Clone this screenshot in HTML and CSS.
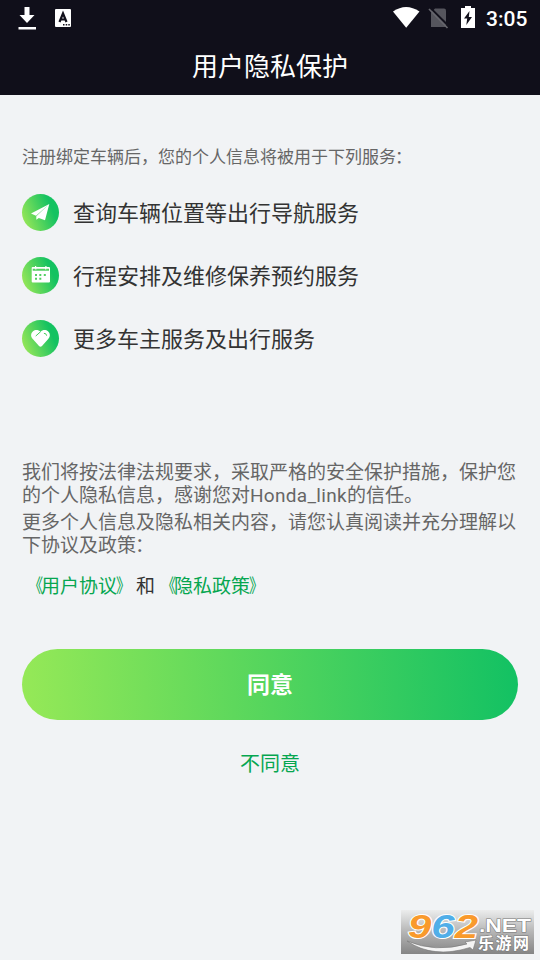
FILE: index.html
```html
<!DOCTYPE html>
<html lang="zh-CN">
<head>
<meta charset="utf-8">
<title>用户隐私保护</title>
<link rel="stylesheet" href="styles.css">
</head>
<body>
<header class="header">
  <div class="status">
    <svg class="status-download" width="20" height="26" viewBox="0 0 20 26"><path fill="#fff" d="M6.500 2h5v8h5L9 18 1.500 10h5zM.5 22H18v2.500H.5z"/></svg>
    <svg class="status-app" width="16" height="18" viewBox="0 0 16 18"><rect width="16" height="18" rx="1" fill="#fff"/><path fill="none" stroke="#11101b" stroke-width="2.200" d="M4.500 13 8 4.500 11.500 13M5.500 10.500h5"/><path fill="#11101b" d="M8 15h1.500v1.500H8zm2.700 0h1.500v1.500h-1.500zm2.600 0h1.500v1.500h-1.500z"/></svg>
    <span class="status-space"></span>
    <svg class="status-wifi" width="27" height="21" viewBox="0 0 27 21"><path fill="#fff" d="M0 4.500Q13-4.500 26.500 4.500L13.200 20.800z"/></svg>
    <svg class="status-sim" width="21" height="22" viewBox="0 0 21 22"><path fill="#55555d" d="M7 1.500h9q2 0 2 2V20H3V5.500z"/><path stroke="#11101b" stroke-width="2" d="M2 .5 20.500 19"/><path stroke="#66666d" stroke-width="1.700" d="M1 2 19.500 21"/></svg>
    <svg class="status-battery" width="14" height="22" viewBox="0 0 14 22"><path fill="#fff" d="M4 0h6v2h4v20H0V2h4z"/><path fill="#11101b" d="M8.500 5 3 12.500h3.200L5.300 19 11 11H7.800z"/></svg>
    <span class="clock">3:05</span>
  </div>
  <h1 class="title">用户隐私保护</h1>
</header>
<main class="content">
  <p class="intro">注册绑定车辆后，您的个人信息将被用于下列服务<span class="colon">：</span></p>
  <ul class="services">
    <li class="service">
      <span class="icon"><svg width="37" height="37" viewBox="0 0 37 37"><path fill="#fff" d="M27.300 10 9 19.500l5 2.300zM27.300 10 14.300 22.200v3.600l2.500-1.900 6.200 2.300z"/></svg></span>
      <span class="label">查询车辆位置等出行导航服务</span>
    </li>
    <li class="service">
      <span class="icon"><svg width="37" height="37" viewBox="0 0 37 37"><path fill="#fff" d="M10.500 10H13V9h1.200v1h9.100V9h1.200v1H27q1 0 1 1v13.500q0 1-1 1H10.700q-1 0-1-1V11q0-1 .8-1z"/><path fill="#53cf62" d="M10.700 11.700h2.500v.8h1.200v-.8h8.700v.8h1.200v-.8H27v2H10.700zM13 17h2v2h-2zm4.300 0h2v2h-2zm4.500 0h2v2h-2zM13 20.700h2v2h-2zm4.300 0h2v2h-2z"/></svg></span>
      <span class="label">行程安排及维修保养预约服务</span>
    </li>
    <li class="service">
      <span class="icon"><svg width="37" height="37" viewBox="0 0 37 37"><path fill="#fff" d="M18.500 11.700C16.500 9.500 13 9.300 11 11.300c-2.500 2.300-2.500 5.500 0 8l6 6.700q1.500 1.500 3 0l6-6.700c2.500-2.500 2.500-5.700 0-8-2-2-5.500-1.800-7.500.4z"/><path fill="none" stroke="#45ce5a" stroke-width="1" stroke-linecap="round" d="m14 15.800 4.500-4M22.300 13.300q2-.2 2.300 2"/></svg></span>
      <span class="label">更多车主服务及出行服务</span>
    </li>
  </ul>
  <section class="notice">
    <p>我们将按法律法规要求，采取严格的安全保护措施，保护您<br>的个人隐私信息，感谢您对<span class="latin">Honda_link</span>的信任。</p>
    <p>更多个人信息及隐私相关内容，请您认真阅读并充分理解以<br>下协议及政策<span class="colon">：</span></p>
  </section>
  <p class="links"><a><span class="open">《</span>用户协议<span class="close">》</span></a>和<a><span class="open">《</span>隐私政策<span class="close">》</span></a></p>
  <button class="agree">同意</button>
  <button class="decline">不同意</button>
</main>
<svg class="badge" width="133" height="44" viewBox="0 0 133 44">
  <defs>
    <linearGradient id="silver" x2="0" y2="1"><stop offset="0" stop-color="#eceded"/><stop offset=".5" stop-color="#b5b5b5"/><stop offset="1" stop-color="#858585"/></linearGradient>
  </defs>
  <rect width="133" height="44" fill="url(#silver)"/>
  <path d="M6 31Q34 43 66 34L64 32 75 30 72 40 69 37.500Q32 49 6 31z" fill="#f4f4f4" stroke="#777" stroke-width=".6"/>
  <text class="badge-number" x="7" y="27.500" textLength="70" lengthAdjust="spacingAndGlyphs">9<tspan fill="#50aee8">6</tspan>2</text>
  <text class="badge-net" x="78" y="21.500" textLength="52" lengthAdjust="spacingAndGlyphs">.NET</text>
  <text class="badge-name" x="77" y="39" textLength="51">乐游网</text>
</svg>
</body>
</html>
```
FILE: styles.css
```css
* { box-sizing: border-box; }
body {
  margin: 0;
  width: 540px;
  height: 960px;
  overflow: hidden;
  position: relative;
  background: #f1f3f5;
  color: #333;
  font-family: "Noto Sans CJK SC", sans-serif;
}
p, h1, ul { margin: 0; padding: 0; }
.header { height: 95px; background: #100f1a; color: #fff; }
.status { display: flex; align-items: flex-start; height: 36px; padding: 5px 12px 0 18px; }
.status svg { flex: none; }
.status-app { margin: 4px 0 0 17px; }
.status-space { flex: 1; }
.status-wifi { margin-top: 2px; }
.status-sim { margin: 2px 0 0 8px; }
.status-battery { margin: 1px 0 0 12px; }
.clock { margin-left: 11px; width: 42px; font: 500 21px/28px Roboto, sans-serif; }
.title { height: 58px; text-align: center; font-size: 26px; font-weight: 400; line-height: 58px; }
.content { padding: 47px 22px 0; }
.intro { font-size: 17px; line-height: 28px; color: #666; }
.colon { margin-left: -1px; }
.services { display: grid; gap: 26px; margin-top: 24px; list-style: none; }
.service { display: flex; align-items: center; gap: 14px; height: 37px; font-size: 22px; line-height: 35px; }
.label { height: 37px; }
.icon { width: 37px; height: 37px; border-radius: 50%; background: linear-gradient(68deg, #a0e957 5%, #14c261 75%); }
.icon svg { display: block; }
.notice { display: grid; gap: 4px; margin-top: 102px; font-size: 19px; line-height: 23px; color: #666; white-space: nowrap; }
.latin { font-family: Roboto, sans-serif; line-height: 0; letter-spacing: .3px; }
.links { margin-top: 16px; font-size: 19px; line-height: 28px; }
.links a { color: #06a650; }
.open, .close { display: inline-block; }
.open { transform: translateX(2px) scaleX(.78); transform-origin: right; }
.close { transform: translateX(-1px) scaleX(.78); transform-origin: left; }
button { display: block; border: 0; padding: 0; font-family: inherit; }
.agree { width: 496px; height: 71px; margin-top: 50px; padding-bottom: 4px; border-radius: 36px; background: linear-gradient(86deg, #96e957, #12c163); color: #fff; font-size: 23px; font-weight: 700; }
.decline { margin: 28px auto 0; background: none; color: #06a650; font-size: 20px; line-height: 30px; }
.badge { position: absolute; left: 401px; top: 910px; }
.badge-number { font: italic 700 34px "Liberation Sans", sans-serif; fill: #f99a2c; stroke: #fff; stroke-width: 2px; paint-order: stroke; }
.badge-net { font: 700 19px "Liberation Sans", sans-serif; fill: #fff; stroke: #777; stroke-width: 1px; paint-order: stroke; }
.badge-name { font: 700 16px "Noto Sans CJK SC", sans-serif; fill: #fff; stroke: #777; stroke-width: 1px; paint-order: stroke; }
```
